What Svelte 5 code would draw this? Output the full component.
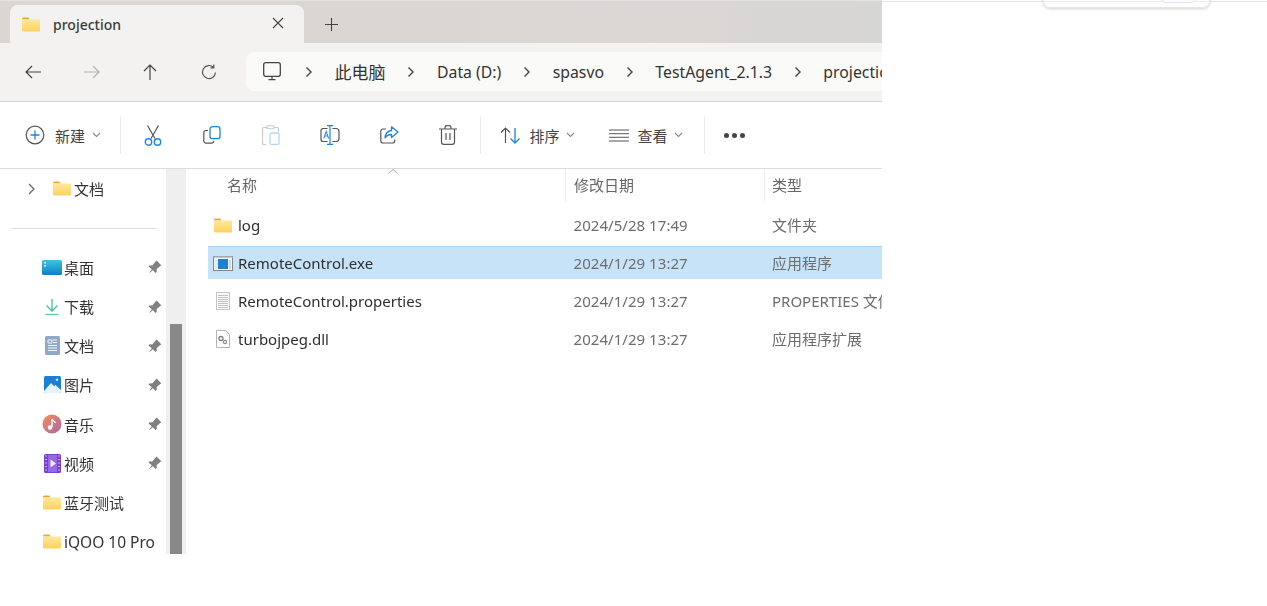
<script>
  const navPins = [
    { label: '桌面', icon: 'desktop', pin: true },
    { label: '下载', icon: 'download', pin: true },
    { label: '文档', icon: 'doc', pin: true },
    { label: '图片', icon: 'pic', pin: true },
    { label: '音乐', icon: 'music', pin: true },
    { label: '视频', icon: 'video', pin: true },
    { label: '蓝牙测试', icon: 'folder', pin: false },
    { label: 'iQOO 10 Pro', icon: 'folder', pin: false, latin: true }
  ];
  const files = [
    { name: 'log', icon: 'folder', date: '2024/5/28 17:49', type: '文件夹' },
    { name: 'RemoteControl.exe', icon: 'exe', date: '2024/1/29 13:27', type: '应用程序', selected: true },
    { name: 'RemoteControl.properties', icon: 'text', date: '2024/1/29 13:27', type: 'PROPERTIES 文件' },
    { name: 'turbojpeg.dll', icon: 'dll', date: '2024/1/29 13:27', type: '应用程序扩展' }
  ];
  const crumbs = ['此电脑', 'Data (D:)', 'spasvo', 'TestAgent_2.1.3', 'projection'];
</script>

{#snippet folder()}
  <svg class="ic" width="18" height="15" viewBox="0 0 18 15">
    <path d="M0 2a1.500 1.500 0 0 1 1.500-1.500h4.500l2 2h-8z" fill="#e6a92b"/>
    <rect x="0" y="2.500" width="18" height="12" rx="1" fill="url(#fg)"/>
  </svg>
{/snippet}

{#snippet chevron()}
  <svg class="crumb-chev" width="8" height="12" viewBox="0 0 8 12"><path d="M1.500 1.500 6 6l-4.500 4.500" fill="none" stroke="#444" stroke-width="1.400"/></svg>
{/snippet}

{#snippet down()}
  <svg class="caret" width="9" height="6" viewBox="0 0 9 6"><path d="M1 1l3.500 3.500L8 1" fill="none" stroke="#8a8a8a" stroke-width="1.100"/></svg>
{/snippet}

{#snippet navIcon(name)}
  {#if name === 'desktop'}
    <svg width="20" height="15" viewBox="0 0 20 15"><rect width="20" height="15" rx="1.500" fill="url(#dk)"/><rect x="2" y="2" width="2" height="1.500" fill="#d6f3fa"/><rect x="2" y="5" width="2" height="1.500" fill="#d6f3fa"/></svg>
  {:else if name === 'download'}
    <svg width="16" height="18" viewBox="0 0 16 18"><path d="M8 1v11M2.500 7.500 8 13l5.500-5.500" fill="none" stroke="#3cc0a0" stroke-width="1.300"/><path d="M1.500 16.500h13" stroke="#5ccdb4" stroke-width="1.400"/></svg>
  {:else if name === 'doc'}
    <svg width="15" height="19" viewBox="0 0 15 19"><rect width="15" height="19" rx="1.500" fill="#8fa9c7"/><path d="M3 4h4v3H3zM8 4h4M8 6.500h4M3 9.500h9M3 12h9M3 14.500h9" stroke="#f0f4f9" fill="none" stroke-width="1"/></svg>
  {:else if name === 'pic'}
    <svg width="17" height="17" viewBox="0 0 17 17"><rect width="17" height="17" rx="1.500" fill="#1b7fd4"/><path d="M0 15 7 7l3 3 1.500-1L17 14v1.500a1.500 1.500 0 0 1-1.500 1.500h-14A1.500 1.500 0 0 1 0 15.500z" fill="#e7f3fc"/><circle cx="13" cy="3.800" r="1.300" fill="#bfe0f8"/></svg>
  {:else if name === 'music'}
    <svg width="20" height="20" viewBox="0 0 20 20"><circle cx="10" cy="10" r="9.500" fill="url(#mu)"/><path d="M10 5v8" stroke="#fff" stroke-width="1.400"/><circle cx="8" cy="13.500" r="2.300" fill="#fff"/><path d="M10 5c1 2 3 2 3.500 4" fill="none" stroke="#fff" stroke-width="1.300"/></svg>
  {:else if name === 'video'}
    <svg width="17" height="19" viewBox="0 0 17 19"><rect width="17" height="19" rx="1.500" fill="#7b3fd1"/><path d="M1 2h2M1 5.500h2M1 9h2M1 12.500h2M1 16h2M14 2h2M14 5.500h2M14 9h2M14 12.500h2M14 16h2" stroke="#cdb6f0" stroke-width="1.200"/><rect x="4" y="1" width="9" height="17" fill="#9767e4"/><path d="M6.500 5.500 12 9.500l-5.500 4z" fill="#f3ecfd"/></svg>
  {:else}
    {@render folder()}
  {/if}
{/snippet}

{#snippet fileIcon(name)}
  {#if name === 'folder'}
    {@render folder()}
  {:else if name === 'exe'}
    <svg width="20" height="15" viewBox="0 0 20 15"><rect x=".5" y=".5" width="19" height="14" fill="#f4f5f6" stroke="#80858b"/><rect x=".5" y=".5" width="19" height="1.500" fill="#c5cad0"/><rect x="5" y="3" width="10" height="10" fill="#1a80d8"/><rect x="16" y="4" width="2" height="9" fill="#d3d8dd"/><rect x="2" y="4" width="2" height="9" fill="#e2e5e8"/></svg>
  {:else if name === 'text'}
    <svg width="14" height="18" viewBox="0 0 14 18"><rect x=".5" y=".5" width="13" height="17" fill="#fafafa" stroke="#c4c4c4"/><path d="M2 3.500h10M2 5.500h10M2 7.500h10M2 9.500h10M2 11.500h10M2 13.500h10M2 15.500h10" stroke="#b3b3b3" stroke-width=".8"/></svg>
  {:else}
    <svg width="14" height="18" viewBox="0 0 14 18"><path d="M.5.500h9l4 4v13H.5z" fill="#fff" stroke="#b5b5b5"/><circle cx="5" cy="8.500" r="2" fill="none" stroke="#7d7d7d" stroke-width="1.300"/><circle cx="9" cy="12" r="1.600" fill="none" stroke="#8d8d8d" stroke-width="1.200"/></svg>
  {/if}
{/snippet}

<svg class="defs" width="0" height="0" aria-hidden="true">
  <defs>
    <linearGradient id="fg" x1="0" y1="0" x2="0" y2="1"><stop offset="0" stop-color="#ffe89c"/><stop offset="1" stop-color="#fbd25e"/></linearGradient>
    <linearGradient id="dk" x1="0" y1="0" x2="0" y2="1"><stop offset="0" stop-color="#3cc6e0"/><stop offset="1" stop-color="#0e7fc4"/></linearGradient>
    <linearGradient id="mu" x1="0" y1="0" x2="1" y2="1"><stop offset="0" stop-color="#f58f4f"/><stop offset="1" stop-color="#a868b0"/></linearGradient>
  </defs>
</svg>

<div class="page">
  <div class="window">
    <div class="tabbar">
      <div class="tab">
        {@render folder()}
        <span class="tab-title">projection</span>
        <svg class="tab-x" width="12" height="12" viewBox="0 0 12 12"><path d="M1 1l10 10M11 1 1 11" stroke="#444" stroke-width="1.100"/></svg>
      </div>
      <svg class="tab-plus" width="13" height="13" viewBox="0 0 13 13"><path d="M6.500 0v13M0 6.500h13" stroke="#444" stroke-width="1.100"/></svg>
    </div>

    <div class="navbar">
      <div class="nav-btn">
        <svg width="16" height="14" viewBox="0 0 16 14"><path d="M16 7H1M7 1 1 7l6 6" fill="none" stroke="#444" stroke-width="1.200"/></svg>
      </div>
      <div class="nav-btn">
        <svg width="16" height="14" viewBox="0 0 16 14"><path d="M0 7h15M9 1l6 6-6 6" fill="none" stroke="#b4b4b2" stroke-width="1.200"/></svg>
      </div>
      <div class="nav-btn">
        <svg width="14" height="16" viewBox="0 0 14 16"><path d="M7 16V1M1 7l6-6 6 6" fill="none" stroke="#444" stroke-width="1.200"/></svg>
      </div>
      <div class="nav-btn">
        <svg width="16" height="16" viewBox="0 0 16 16"><path d="M14.500 8.500A6.500 6.500 0 1 1 12.500 3.300M12.800 .5v3.300H9.500" fill="none" stroke="#555" stroke-width="1.200"/></svg>
      </div>
      <div class="address">
        <svg class="pc" width="18" height="19" viewBox="0 0 18 19"><rect x=".7" y=".7" width="16.600" height="13.600" rx="2" fill="none" stroke="#444" stroke-width="1.300"/><path d="M9 14.500v3M5.500 17.700h7" stroke="#444" stroke-width="1.200"/></svg>
        {@render chevron()}
        {#each crumbs as crumb, i}
          <span class="crumb" class:cjk={i === 0}>{crumb}</span>
          {#if i < crumbs.length - 1}{@render chevron()}{/if}
        {/each}
      </div>
    </div>

    <div class="toolbar">
      <div class="tool-text first">
        <svg width="20" height="20" viewBox="0 0 20 20"><circle cx="10" cy="10" r="8.800" fill="none" stroke="#555" stroke-width="1.200"/><path d="M10 5.500v9M5.500 10h9" stroke="#1c86dc" stroke-width="1.300"/></svg>
        <span>新建</span>
        {@render down()}
      </div>
      <i class="sep"></i>
      <div class="tools">
        <div class="tool">
          <svg width="18" height="21" viewBox="0 0 18 21"><path d="M3.500 0.500 11 13.500M14.500 0.500 7 13.500" fill="none" stroke="#555" stroke-width="1.200"/><circle cx="4.500" cy="17" r="3.200" fill="none" stroke="#1c86dc" stroke-width="1.400"/><circle cx="13.500" cy="17" r="3.200" fill="none" stroke="#1c86dc" stroke-width="1.400"/></svg>
        </div>
        <div class="tool">
          <svg width="18" height="18" viewBox="0 0 18 18"><rect x="7" y=".7" width="10" height="12" rx="2.500" fill="#fff" stroke="#1c86dc" stroke-width="1.300"/><path d="M5 4.500H3A2.200 2.200 0 0 0 .8 6.700v8.300A2.200 2.200 0 0 0 3 17.200h5.500a2.200 2.200 0 0 0 2.200-2.200" fill="none" stroke="#555" stroke-width="1.200"/></svg>
        </div>
        <div class="tool">
          <svg width="18" height="20" viewBox="0 0 18 20"><path d="M5 2.500H2a1.500 1.500 0 0 0-1.500 1.500v14A1.500 1.500 0 0 0 2 19.500h2M12 2.500h3A1.500 1.500 0 0 1 16.500 4v3" fill="none" stroke="#c9c9c9" stroke-width="1.200"/><rect x="5" y=".7" width="7" height="3" rx="1" fill="none" stroke="#c9c9c9" stroke-width="1.100"/><rect x="8" y="8" width="9" height="11.500" rx="1.500" fill="none" stroke="#b4d8f3" stroke-width="1.300"/></svg>
        </div>
        <div class="tool">
          <svg width="20" height="20" viewBox="0 0 20 20"><path d="M7.500 3.500H3A2 2 0 0 0 1 5.500v9a2 2 0 0 0 2 2h4.500M12.500 3.500H16a3 3 0 0 1 3 3v7a3 3 0 0 1-3 3h-3.500" fill="none" stroke="#555" stroke-width="1.200"/><path d="M7 .7h6M7 19.300h6M10 .7v18.600" stroke="#1c86dc" stroke-width="1.200" fill="none"/><path d="M3.800 13.500 6.200 6.500 8.700 13.500M4.700 11h3" fill="none" stroke="#3a8fd8" stroke-width="1.100"/></svg>
        </div>
        <div class="tool">
          <svg width="19" height="18" viewBox="0 0 19 18"><path d="M6 3H3A2.200 2.200 0 0 0 .8 5.200v9.600A2.200 2.200 0 0 0 3 17h9.500a2.200 2.200 0 0 0 2.200-2.200v-1.300" fill="none" stroke="#555" stroke-width="1.200"/><path d="M11.500 .8 18 6l-6.500 5.500V8.500C8.500 8.500 6.500 9.500 5 12c.3-4 2.500-7 6.500-7.500z" fill="none" stroke="#1c86dc" stroke-width="1.300" stroke-linejoin="round"/></svg>
        </div>
        <div class="tool">
          <svg width="18" height="20" viewBox="0 0 18 20"><path d="M0 4h18M6 4V2.500A1.800 1.800 0 0 1 7.800.7h2.400A1.800 1.800 0 0 1 12 2.500V4M2.500 4v13a2.300 2.300 0 0 0 2.300 2.300h8.400a2.300 2.300 0 0 0 2.300-2.300V4M7 8v7M11 8v7" fill="none" stroke="#555" stroke-width="1.200"/></svg>
        </div>
      </div>
      <i class="sep"></i>
      <div class="tool-text sort">
        <svg width="21" height="17" viewBox="0 0 21 17"><path d="M5.500 16V1M1 5.500 5.500 1 10 5.500" fill="none" stroke="#555" stroke-width="1.200"/><path d="M15 1v15M10.500 11.500 15 16l4.500-4.500" fill="none" stroke="#1c86dc" stroke-width="1.300"/></svg>
        <span>排序</span>
        {@render down()}
      </div>
      <div class="tool-text view">
        <svg width="20" height="13" viewBox="0 0 20 13"><path d="M0 1h20M0 4.700h20M0 8.300h20M0 12h20" stroke="#555" stroke-width="1"/></svg>
        <span>查看</span>
        {@render down()}
      </div>
      <i class="sep last"></i>
      <div class="more"><b></b><b></b><b></b></div>
    </div>

    <div class="body">
      <aside class="side">
        <div class="side-list">
          <div class="side-row top">
            <svg class="expander" width="7" height="12" viewBox="0 0 7 12"><path d="M1 1l5 5-5 5" fill="none" stroke="#666" stroke-width="1.300"/></svg>
            {@render folder()}
            <span class="top-label">文档</span>
          </div>
          <div class="side-row"><hr /></div>
          {#each navPins as item}
            <div class="side-row item">
              <span class="side-ic">{@render navIcon(item.icon)}</span>
              <span class="side-label" class:latin={item.latin}>{item.label}</span>
              {#if item.pin}
                <svg class="pin" width="14" height="14" viewBox="0 0 13 13"><path d="M8 .5l4.500 4.500-1.200.6-3.300 3 .2 2.400-1.200 1L4.500 9.500.8 12.500 3.500 8.500.5 6l1-1.200 2.400.2 3-3.300z" fill="#808080"/></svg>
              {/if}
            </div>
          {/each}
        </div>
        <div class="scroll"><div class="thumb"></div></div>
      </aside>

      <main class="content">
        <div class="head">
          <div class="col-name">名称<svg class="sort-caret" width="10" height="5" viewBox="0 0 10 5"><path d="M.5 4.500 5 .5l4.500 4" fill="none" stroke="#aaa"/></svg></div>
          <div class="col-date">修改日期</div>
          <div class="col-type">类型</div>
        </div>
        {#each files as f}
          <div class="file" class:selected={f.selected}>
            <div class="cell-name"><span class="file-ic">{@render fileIcon(f.icon)}</span><span>{f.name}</span></div>
            <div class="cell-date">{f.date}</div>
            <div class="cell-type">{f.type}</div>
          </div>
        {/each}
      </main>
    </div>
  </div>

  <div class="beyond">
    <div class="popup"><div class="popup-btn"></div></div>
  </div>
</div>

<style>
  :global(body) { margin: 0; background: #fff; }
  .defs { position: absolute; }
  .page {
    width: 1267px; height: 606px; display: flex; overflow: hidden; background: #fff;
    font-family: "Noto Sans", "Noto Sans CJK SC", sans-serif; color: #333;
  }
  .window { width: 882px; height: 554px; flex: none; display: flex; flex-direction: column; overflow: hidden; filter: blur(0.35px); }
  .beyond { flex: 1; height: 2px; border-bottom: 1px solid #e4e4e4; box-sizing: border-box; position: relative; }
  .popup {
    position: absolute; left: 161px; top: -12px; width: 167px; height: 20px; box-sizing: border-box;
    background: linear-gradient(#fff 12px, #eeeeee 12px, #eeeeee 13px, #fff 13px);
    border: 1px solid #e6e6e6; border-radius: 7px; box-shadow: 0 1px 3px rgba(0,0,0,.18);
  }
  .popup-btn { position: absolute; left: 116px; top: 2px; width: 37px; height: 12px; box-sizing: border-box; border: 1px solid #dfe6f5; border-radius: 8px; background: #fcfdff; }

  .tabbar {
    height: 43px; flex: none; box-sizing: border-box; padding: 5px 0 0 10px; display: flex; align-items: stretch;
    background: linear-gradient(90deg, #dcd6d2 0%, #dcd6d2 50%, #dbd7d4 72%, #d6d6d5 100%);
    border-top: 1px solid #e3e3e3;
  }
  .tab {
    width: 294px; box-sizing: border-box; background: #f3f2f0; border-radius: 8px 8px 0 0;
    display: flex; align-items: center; padding: 0 20px 0 12px; margin-top: -1px;
  }
  .tab-title { margin-left: 13px; font-size: 14px; font-weight: 500; color: #3c3c3c; flex: 1; }
  .tab-x { margin-bottom: 3px; }
  .tab-plus { margin: 12px 0 0 21px; }

  .navbar {
    height: 59px; flex: none; box-sizing: border-box; display: flex; align-items: flex-start; background: #f3f2f0;
    border-bottom: 1px solid #d6d4d1; padding: 9px 0 0 3.500px;
  }
  .nav-btn { width: 58.700px; height: 39px; flex: none; display: flex; align-items: center; justify-content: center; }
  .address {
    flex: 1; height: 39px; margin-left: 7.700px; padding-left: 17px; display: flex; align-items: center; gap: 21.700px;
    background: #fafaf8; border-radius: 8px 0 0 8px; white-space: nowrap; overflow: hidden; font-size: 15.800px;
  }
  .pc { flex: none; margin-right: 2.300px; }
  .crumb { color: #333; }
  .crumb.cjk { font-size: 17px; }
  .crumb-chev { flex: none; }

  .toolbar {
    height: 67px; flex: none; box-sizing: border-box; display: flex; align-items: center; background: #fff;
    border-bottom: 1px solid #dcdcdc;
  }
  .tool-text { display: flex; align-items: center; gap: 9px; font-size: 15px; color: #444; flex: none; white-space: nowrap; }
  .tool-text.first { margin-left: 25px; width: 95px; gap: 10px; }
  .tool-text.sort { margin-left: 19px; width: 89px; }
  .tool-text.view { margin-left: 20px; width: 75px; }
  .caret { margin-left: -3px; }
  .tools { display: flex; padding: 0 2px 0 2.500px; flex: none; }
  .tool { width: 59px; flex: none; display: flex; align-items: center; justify-content: center; }
  .sep { width: 1px; height: 38px; background: #ebebeb; flex: none; }
  .sep.last { margin-left: 20px; }
  .more { display: flex; gap: 3px; margin-left: 19px; }
  .more b { width: 5px; height: 5px; border-radius: 50%; background: #444; }

  .body { flex: 1; min-height: 0; display: flex; }
  .side { width: 186px; flex: none; display: flex; }
  .side-list { width: 166px; flex: none; padding-top: .4px; overflow: hidden; }
  .side-row { height: 39.2px; display: flex; align-items: center; box-sizing: border-box; }
  .side-row.top { padding-left: 28px; }
  .top-label { margin-left: 3px; font-size: 15px; }
  .expander { margin-right: 18px; }
  hr { width: 144px; margin: 0 0 0 12px; border: 0; border-top: 1px solid #dedede; }
  .side-row.item { padding-left: 40px; }
  .side-ic { width: 24px; flex: none; display: flex; justify-content: center; align-items: center; }
  .side-label { font-size: 15px; white-space: nowrap; flex: 1; }
  .side-label.latin { font-size: 15.5px; }
  .pin { margin-right: 4px; flex: none; }
  .scroll { width: 20px; flex: none; background: #efefef; padding-left: 4px; box-sizing: border-box; }
  .thumb { width: 12px; height: 230px; margin-top: 155px; background: #888; }

  .content { flex: 1; min-width: 0; overflow: hidden; padding-left: 22px; background: #fff; }
  .head { height: 37px; display: flex; box-sizing: border-box; font-size: 15px; color: #666; }
  .head > div { display: flex; align-items: center; height: 33px; padding-bottom: 2px; box-sizing: border-box; position: relative; }
  .col-name { width: 357px; padding-left: 19px; flex: none; }
  .col-date { width: 199px; padding-left: 8px; border-left: 1px solid #ececec; flex: none; }
  .col-type { flex: 1; padding-left: 7px; border-left: 1px solid #ececec; }
  .sort-caret { position: absolute; left: 180px; top: 0; }

  .file { height: 38px; display: flex; align-items: center; font-size: 15px; white-space: nowrap; box-sizing: border-box; }
  .file.selected {
    background:
      linear-gradient(#a8d4f2, #a8d4f2) 0 2px / 100% 1px no-repeat,
      linear-gradient(#c7e3f8, #c7e3f8) 0 2px / 100% 33px no-repeat;
  }
  .cell-name { width: 357px; flex: none; display: flex; align-items: center; color: #2f2f2f; }
  .file-ic { width: 30px; flex: none; display: flex; justify-content: center; }
  .cell-date { width: 199px; flex: none; padding-left: 8.500px; box-sizing: border-box; color: #6d6d6d; letter-spacing: .05px; }
  .cell-type { padding: 0 0 2px 8px; color: #6d6d6d; flex: none; }
</style>
